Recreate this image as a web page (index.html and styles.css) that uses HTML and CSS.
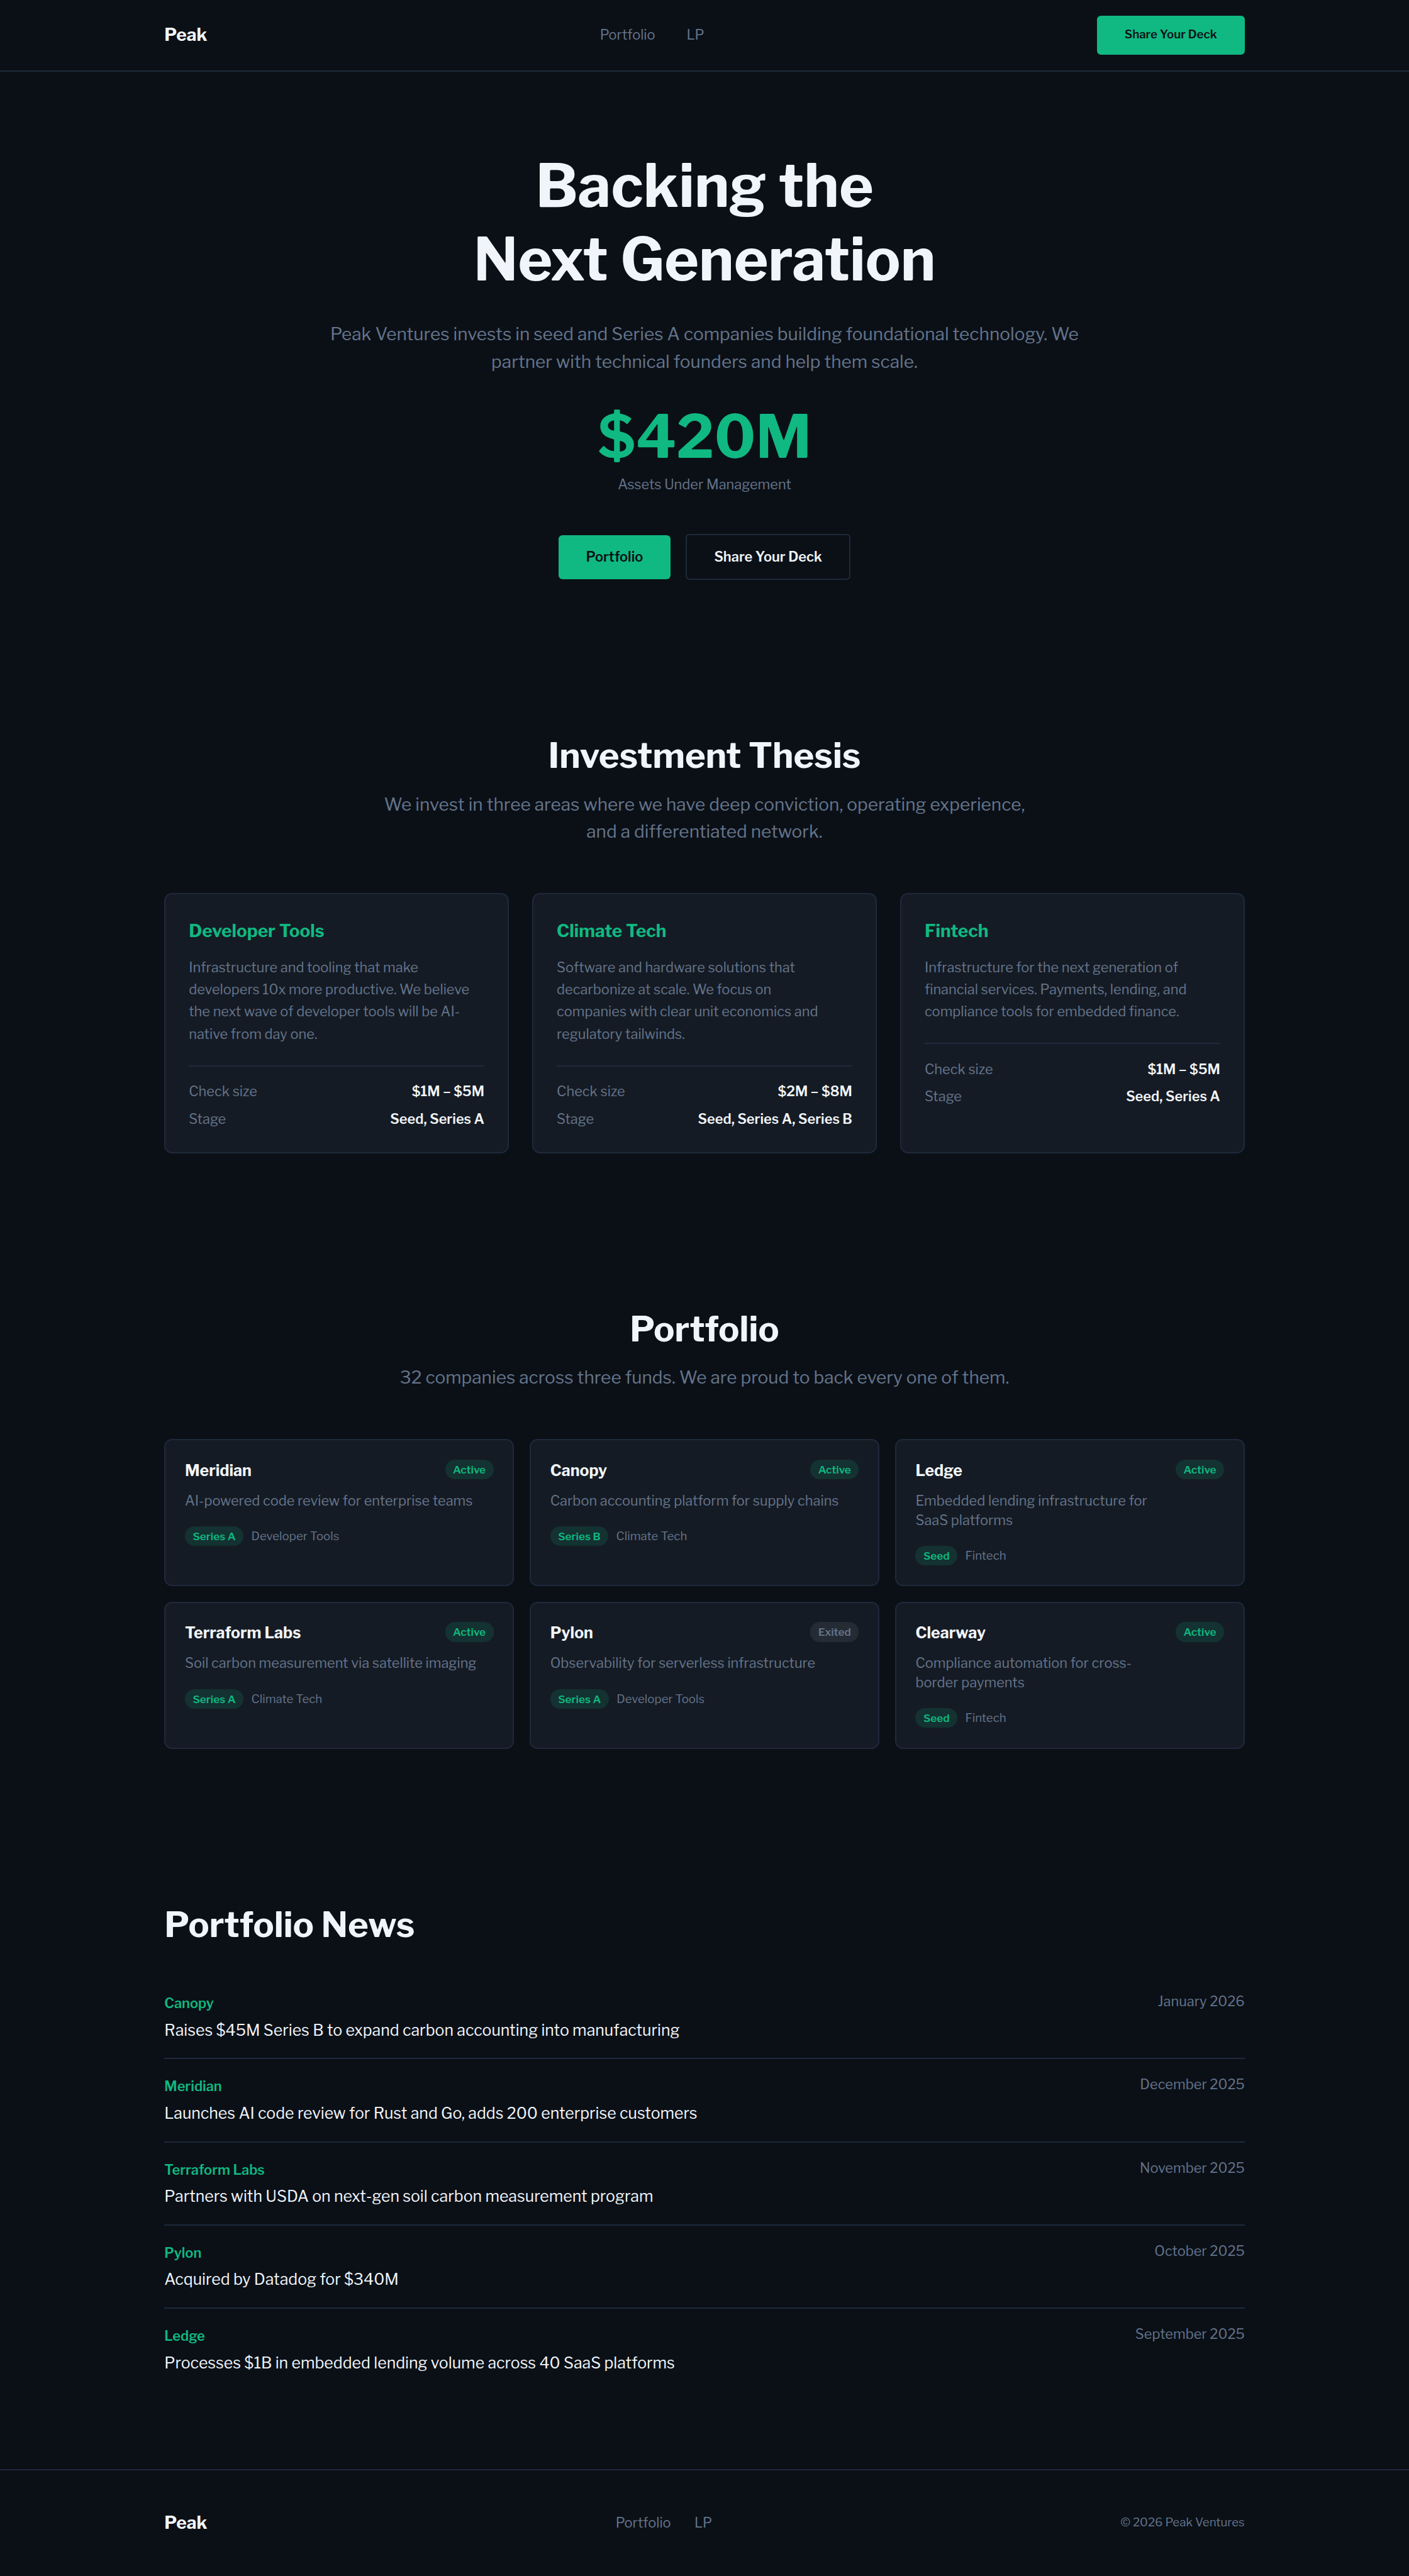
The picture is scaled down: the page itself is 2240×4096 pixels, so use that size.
FILE: index.html
```html
<!doctype html>
<html lang="en">
<head>
    <meta charset="utf-8">
    <title>Peak Ventures</title>
    <link rel="stylesheet" href="styles.css">
</head>

<body>
    <header class="nav">
        <div class="container nav-inner">
            <a class="logo" href="#">Peak</a>
            <nav class="nav-links">
                <a href="#portfolio">Portfolio</a>
                <a href="#lp">LP</a>
            </nav>
            <a class="btn btn-small" href="#deck">Share Your Deck</a>
        </div>
    </header>

    <section class="hero">
        <h1>Backing the<br>Next Generation</h1>
        <p class="hero-text">Peak Ventures invests in seed and Series A companies building foundational technology. We<br>partner with technical founders and help them scale.</p>
        <div class="aum">$420M</div>
        <div class="aum-label">Assets Under Management</div>
        <div class="hero-actions">
            <a class="btn btn-primary" href="#portfolio">Portfolio</a>
            <a class="btn btn-outline" href="#deck">Share Your Deck</a>
        </div>
    </section>

    <section class="section container">
        <h2>Investment Thesis</h2>
        <p class="section-text">We invest in three areas where we have deep conviction, operating experience,<br>and a differentiated network.</p>

        <div class="thesis-grid">
            <div class="card thesis-card">
                <h3>Developer Tools</h3>
                <p>Infrastructure and tooling that make<br>developers 10x more productive. We believe<br>the next wave of developer tools will be AI-<br>native from day one.</p>
                <dl class="thesis-meta">
                    <div><dt>Check size</dt><dd>$1M – $5M</dd></div>
                    <div><dt>Stage</dt><dd>Seed, Series A</dd></div>
                </dl>
            </div>
            <div class="card thesis-card">
                <h3>Climate Tech</h3>
                <p>Software and hardware solutions that<br>decarbonize at scale. We focus on<br>companies with clear unit economics and<br>regulatory tailwinds.</p>
                <dl class="thesis-meta">
                    <div><dt>Check size</dt><dd>$2M – $8M</dd></div>
                    <div><dt>Stage</dt><dd>Seed, Series A, Series B</dd></div>
                </dl>
            </div>
            <div class="card thesis-card">
                <h3>Fintech</h3>
                <p>Infrastructure for the next generation of<br>financial services. Payments, lending, and<br>compliance tools for embedded finance.</p>
                <dl class="thesis-meta">
                    <div><dt>Check size</dt><dd>$1M – $5M</dd></div>
                    <div><dt>Stage</dt><dd>Seed, Series A</dd></div>
                </dl>
            </div>
        </div>
    </section>

    <section class="section container" id="portfolio">
        <h2>Portfolio</h2>
        <p class="section-text">32 companies across three funds. We are proud to back every one of them.</p>

        <div class="company-grid">
            <div class="card company">
                <div class="company-top"><h4>Meridian</h4><span class="pill">Active</span></div>
                <p>AI-powered code review for enterprise teams</p>
                <div class="company-tags"><span class="pill">Series A</span><span class="sector">Developer Tools</span></div>
            </div>
            <div class="card company">
                <div class="company-top"><h4>Canopy</h4><span class="pill">Active</span></div>
                <p>Carbon accounting platform for supply chains</p>
                <div class="company-tags"><span class="pill">Series B</span><span class="sector">Climate Tech</span></div>
            </div>
            <div class="card company">
                <div class="company-top"><h4>Ledge</h4><span class="pill">Active</span></div>
                <p>Embedded lending infrastructure for<br>SaaS platforms</p>
                <div class="company-tags"><span class="pill">Seed</span><span class="sector">Fintech</span></div>
            </div>
            <div class="card company">
                <div class="company-top"><h4>Terraform Labs</h4><span class="pill">Active</span></div>
                <p>Soil carbon measurement via satellite imaging</p>
                <div class="company-tags"><span class="pill">Series A</span><span class="sector">Climate Tech</span></div>
            </div>
            <div class="card company">
                <div class="company-top"><h4>Pylon</h4><span class="pill pill-exited">Exited</span></div>
                <p>Observability for serverless infrastructure</p>
                <div class="company-tags"><span class="pill">Series A</span><span class="sector">Developer Tools</span></div>
            </div>
            <div class="card company">
                <div class="company-top"><h4>Clearway</h4><span class="pill">Active</span></div>
                <p>Compliance automation for cross-<br>border payments</p>
                <div class="company-tags"><span class="pill">Seed</span><span class="sector">Fintech</span></div>
            </div>
        </div>
    </section>

    <section class="section container news">
        <h2>Portfolio News</h2>
        <ul class="news-list">
            <li>
                <div>
                    <div class="news-company">Canopy</div>
                    <div class="news-title">Raises $45M Series B to expand carbon accounting into manufacturing</div>
                </div>
                <time>January 2026</time>
            </li>
            <li>
                <div>
                    <div class="news-company">Meridian</div>
                    <div class="news-title">Launches AI code review for Rust and Go, adds 200 enterprise customers</div>
                </div>
                <time>December 2025</time>
            </li>
            <li>
                <div>
                    <div class="news-company">Terraform Labs</div>
                    <div class="news-title">Partners with USDA on next-gen soil carbon measurement program</div>
                </div>
                <time>November 2025</time>
            </li>
            <li>
                <div>
                    <div class="news-company">Pylon</div>
                    <div class="news-title">Acquired by Datadog for $340M</div>
                </div>
                <time>October 2025</time>
            </li>
            <li>
                <div>
                    <div class="news-company">Ledge</div>
                    <div class="news-title">Processes $1B in embedded lending volume across 40 SaaS platforms</div>
                </div>
                <time>September 2025</time>
            </li>
        </ul>
    </section>

    <footer class="footer">
        <div class="container footer-inner">
            <a class="logo" href="#">Peak</a>
            <nav class="footer-links">
                <a href="#portfolio">Portfolio</a>
                <a href="#lp">LP</a>
            </nav>
            <span class="copyright">© 2026 Peak Ventures</span>
        </div>
    </footer>
</body>
</html>
```
FILE: styles.css
```css
:root {
    --bg: #0b1017;
    --card: #151b24;
    --border: #1e293b;
    --text: #f1f5f9;
    --muted: #64748b;
    --accent: #10b981;
}

* {
    box-sizing: border-box;
    margin: 0;
    padding: 0;
}

html {
    font-size: 15.5556px;
}

body {
    background: var(--bg);
    color: var(--text);
    font-family: "Libre Franklin", "Open Sans", sans-serif;
    font-size: 1.4rem;
    line-height: 1.55;
    white-space: nowrap;
}

a {
    color: inherit;
    text-decoration: none;
}

.container {
    width: 110.4rem;
    margin: 0 auto;
}

/* nav */
.nav {
    height: 7.3rem;
    border-bottom: 2px solid var(--border);
}

.nav-inner,
.footer-inner {
    height: 100%;
    display: flex;
    justify-content: space-between;
    align-items: center;
}

.logo {
    font-size: 1.8rem;
    font-weight: 700;
}

.nav-links,
.footer-links {
    display: flex;
    gap: 3.2rem;
    color: var(--muted);
}

.footer-links {
    gap: 2.4rem;
}

.btn {
    display: flex;
    align-items: center;
    justify-content: center;
    height: 4.5rem;
    border-radius: 0.4rem;
    font-weight: 600;
}

.btn-small {
    width: 15.1rem;
    height: 4rem;
    background: var(--accent);
    color: var(--bg);
    font-size: 1.2rem;
}

.btn-primary {
    width: 11.4rem;
    background: var(--accent);
    color: var(--bg);
}

.btn-outline {
    width: 16.8rem;
    height: 4.7rem;
    border: 2px solid var(--border);
}

/* hero */
.hero {
    padding: 8rem 0;
    text-align: center;
}

h1 {
    font-size: 6rem;
    font-weight: 700;
    line-height: 1.25;
}

.hero-text {
    margin-top: 2.4rem;
    font-size: 1.8rem;
    line-height: 1.6;
    color: var(--muted);
}

.aum {
    margin-top: 3.2rem;
    font-size: 6rem;
    font-weight: 700;
    line-height: 1;
    color: var(--accent);
}

.aum-label {
    margin-top: 0.8rem;
    color: var(--muted);
}

.hero-actions {
    display: flex;
    justify-content: center;
    align-items: center;
    gap: 1.6rem;
    margin-top: 3.97rem;
}

/* sections */
.section {
    padding: 8rem 0;
}

h2 {
    font-size: 3.6rem;
    font-weight: 700;
    line-height: 1.1;
    text-align: center;
}

.section-text {
    margin: 1.6rem 0 4.86rem;
    font-size: 1.8rem;
    color: var(--muted);
    text-align: center;
}

.card {
    background: var(--card);
    border: 2px solid var(--border);
    border-radius: 0.8rem;
}

/* thesis */
.thesis-grid {
    display: grid;
    grid-template-columns: repeat(3, 1fr);
    gap: 2.4rem;
}

.thesis-card {
    height: 26.6rem;
    padding: 2.37rem;
}

.thesis-card h3 {
    font-size: 1.8rem;
    font-weight: 700;
    color: var(--accent);
}

.thesis-card p {
    margin-top: 1.18rem;
    line-height: 2.275rem;
    color: var(--muted);
}

.thesis-meta {
    display: flex;
    flex-direction: column;
    gap: 0.8rem;
    margin-top: 2.03rem;
    padding-top: 1.57rem;
    border-top: 2px solid var(--border);
}

.thesis-meta div {
    display: flex;
    justify-content: space-between;
    line-height: 2rem;
}

.thesis-meta dt {
    color: var(--muted);
}

.thesis-meta dd {
    font-weight: 600;
}

/* portfolio */
.company-grid {
    display: grid;
    grid-template-columns: repeat(3, 1fr);
    gap: 1.6rem;
}

.company {
    height: 15.03rem;
    padding: 1.97rem;
}

.company-top {
    display: flex;
    justify-content: space-between;
    align-items: flex-start;
    height: 2.2rem;
}

.company h4 {
    font-size: 1.6rem;
    font-weight: 700;
    line-height: 2.2rem;
}

.company p {
    margin-top: 1.01rem;
    line-height: 1.98rem;
    color: var(--muted);
}

.company-tags {
    display: flex;
    align-items: center;
    gap: 0.8rem;
    margin-top: 1.63rem;
}

.pill {
    height: 2rem;
    padding: 0 0.8rem;
    border-radius: 1rem;
    background: rgba(16, 185, 129, 0.15);
    color: var(--accent);
    font-size: 1.1rem;
    font-weight: 600;
    line-height: 2rem;
}

.pill-exited {
    background: rgba(148, 163, 184, 0.12);
    color: var(--muted);
}

.sector {
    font-size: 1.2rem;
    line-height: 2rem;
    color: var(--muted);
}

/* news */
.news h2 {
    text-align: left;
}

.news-list {
    list-style: none;
    margin-top: 3.28rem;
}

.news-list li {
    display: flex;
    justify-content: space-between;
    height: 8.5rem;
    padding-top: 1.8rem;
    border-bottom: 2px solid var(--border);
}

.news-list li:last-child {
    height: 8.4rem;
    border-bottom: none;
}

.news-company {
    font-weight: 600;
    line-height: 2rem;
    color: var(--accent);
}

.news-title {
    margin-top: 0.48rem;
    font-size: 1.6rem;
}

.news-list time {
    line-height: 1.6rem;
    color: var(--muted);
}

/* footer */
.footer {
    height: 10.9rem;
    border-top: 2px solid var(--border);
}

.copyright {
    font-size: 1.2rem;
    color: var(--muted);
}
```
